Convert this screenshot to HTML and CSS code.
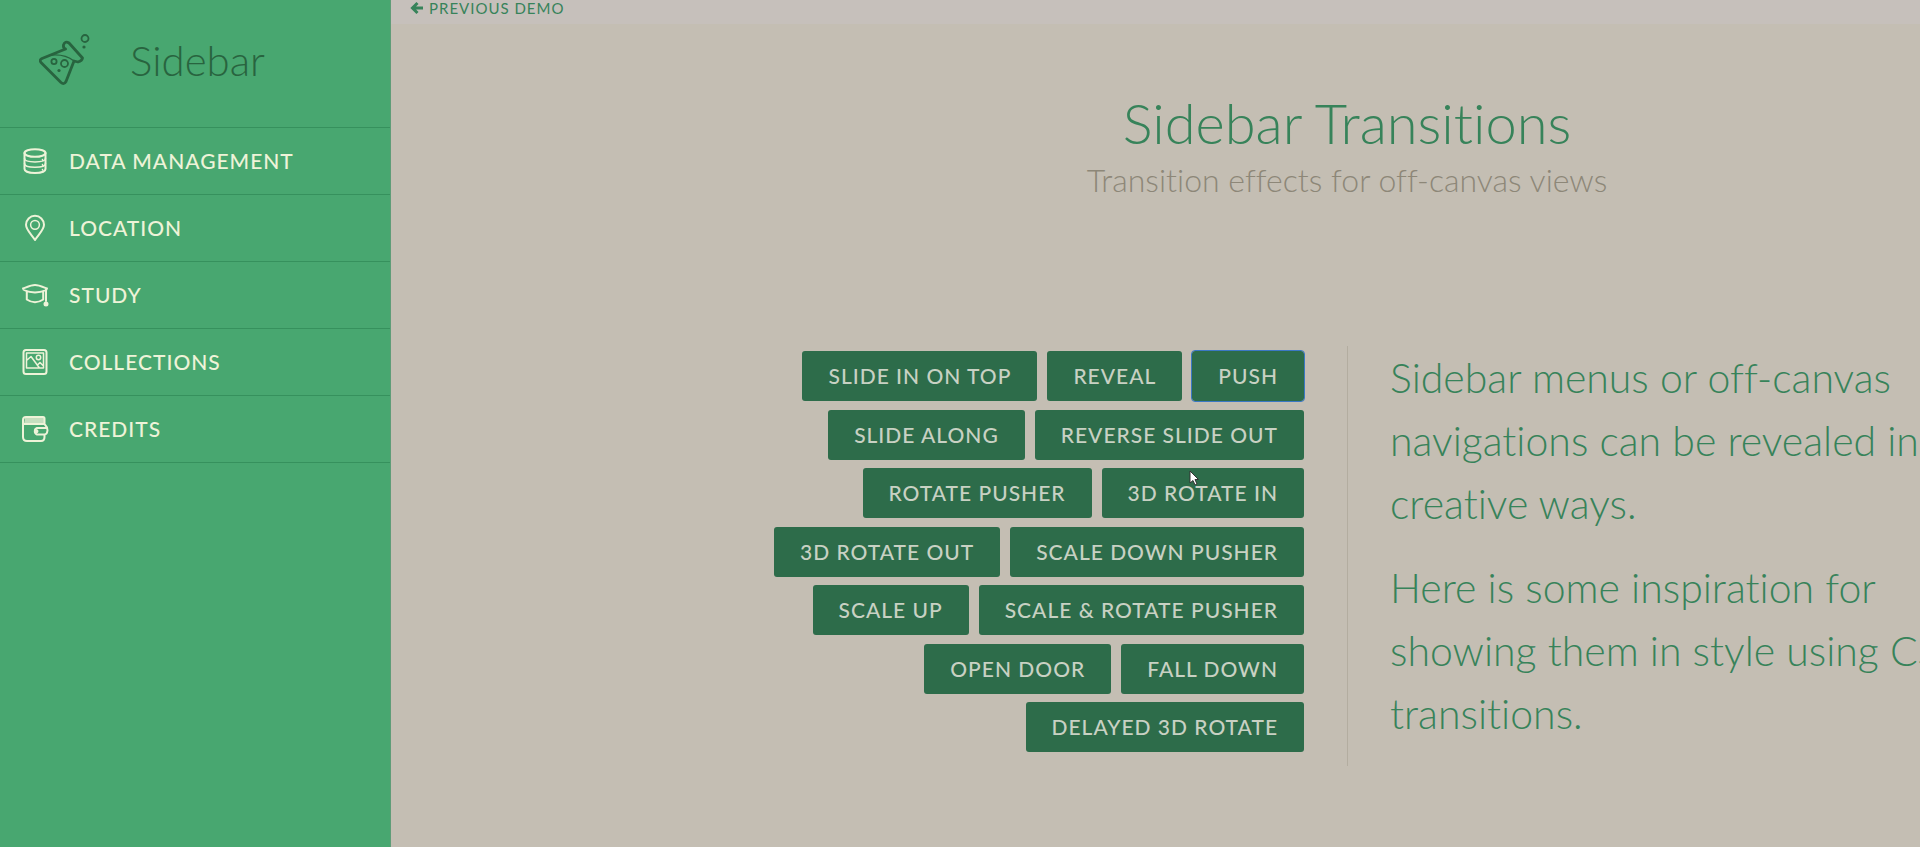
FILE: index.html
```html
<!DOCTYPE html>
<html lang="en">
<head>
<meta charset="utf-8">
<title>Sidebar Transitions</title>
<link rel="stylesheet" href="styles.css">
</head>
<body>
<div class="container">
  <nav class="menu">
    <h2 class="menu-title">
      <svg class="menu-logo" viewBox="0 0 52 52" aria-hidden="true">
        <g fill="none" stroke="currentColor" stroke-linejoin="round" stroke-linecap="round">
          <path stroke-width="2.8" d="M26.500 15L3 24.500Q0 26 2 28.500L22 48.500Q25 51 27 47.500L35 27L39 28Q43 27 43.500 24L30 9Q26 6.500 24.500 11Q24 14 26.500 15"/>
          <path stroke-width="1.400" d="M13 21Q26 20 35 27"/>
          <circle stroke-width="1.800" cx="15" cy="27.500" r="2.600"/>
          <circle stroke-width="1.800" cx="25.500" cy="29.500" r="3.500"/>
          <circle stroke-width="1.800" cx="46" cy="4.500" r="3.500"/>
        </g>
        <circle fill="currentColor" cx="20" cy="36.500" r="1.600"/>
        <circle fill="currentColor" cx="45" cy="13" r="1.600"/>
      </svg>
      <span>Sidebar</span>
    </h2>
    <ul class="menu-list">
      <li><a class="menu-link" href="#">
        <svg class="menu-icon" viewBox="0 0 26 26" aria-hidden="true"><ellipse cx="13" cy="5" rx="10.500" ry="3.800"/><path d="M2.500 5V21C2.500 26.300 23.500 26.300 23.500 21V5"/><path class="thin" d="M2.500 10.500C2.500 15 23.500 15 23.500 10.500M2.500 15.500C2.500 20.500 23.500 20.500 23.500 15.500M20.500 11.500v.5M20.500 16.500v.5M20.500 21.500v.5"/></svg>
        Data Management</a></li>
      <li><a class="menu-link" href="#">
        <svg class="menu-icon" viewBox="0 0 26 26" aria-hidden="true"><path d="M13 25C10 20 4 15 4 9.800A9 9 0 0 1 22 9.800C22 15 16 20 13 25Z"/><circle class="thin" cx="13" cy="9.800" r="4.400"/></svg>
        Location</a></li>
      <li><a class="menu-link" href="#">
        <svg class="menu-icon" viewBox="0 0 26 26" aria-hidden="true"><path d="M1 6.500C5 5 9 3 13 3S21 5 25 6.500C25 9 18 10 13 10.500C8 10 1 9 1 6.500ZM4.800 9V17.500Q13 23 21.200 17.500V9M24 7.500V19"/><circle class="solid" cx="24" cy="22" r="1.500"/></svg>
        Study</a></li>
      <li><a class="menu-link" href="#">
        <svg class="menu-icon" viewBox="0 0 26 26" aria-hidden="true"><rect x="1.500" y="1" width="23" height="24" rx="2.500"/><path class="thin" d="M4.500 4h17v15h-17ZM4.500 11.500L9 7.500L17.500 19M15.500 16L18 13.500L21.500 17"/><circle class="thin" cx="16.500" cy="8.500" r="2.200"/></svg>
        Collections</a></li>
      <li><a class="menu-link" href="#">
        <svg class="menu-icon" viewBox="0 0 26 26" aria-hidden="true"><path class="shade" d="M3 2H22.500V8H2Z"/><path d="M22.500 8V2.500Q22.500 1 21 1H4Q1 1 1 4V21Q1 25 5 25H19Q22.500 25 22.500 21V19M1 8H22.500Q25.500 11 25.500 14.500Q25 18.500 22.500 18.500H15A3.500 3.500 0 0 1 15 12H24"/><circle class="solid" cx="14.500" cy="15.300" r="1"/></svg>
        Credits</a></li>
    </ul>
  </nav>
  <main class="pusher">
    <div class="top-bar">
      <a class="top-link" href="#">
        <svg class="top-arrow" viewBox="0 0 14 14" aria-hidden="true"><path d="M7.500 2L2.500 7L7.500 12M3 7H13"/></svg>
        Previous Demo</a>
    </div>
    <header class="page-header">
      <h1 class="page-title">Sidebar Transitions</h1>
      <p class="page-subtitle">Transition effects for off-canvas views</p>
    </header>
    <div class="columns">
      <div class="effects">
        <button type="button">Slide in on top</button>
        <button type="button">Reveal</button>
        <button type="button" class="is-focused">Push</button>
        <button type="button">Slide along</button>
        <button type="button">Reverse slide out</button>
        <button type="button">Rotate pusher</button>
        <button type="button">3D rotate in</button>
        <button type="button">3D rotate out</button>
        <button type="button">Scale down pusher</button>
        <button type="button">Scale up</button>
        <button type="button">Scale &amp; rotate pusher</button>
        <button type="button">Open door</button>
        <button type="button">Fall down</button>
        <button type="button">Delayed 3D rotate</button>
      </div>
      <div class="intro">
        <p>Sidebar menus or off-canvas navigations can be revealed in creative ways.</p>
        <p>Here is some inspiration for showing them in style using CSS transitions.</p>
      </div>
    </div>
  </main>
</div>
<svg class="cursor" viewBox="0 0 10 16" aria-hidden="true"><path d="M1 1V13L4 10.500L6 15L8 14L6 9.500H9.500Z"/></svg>
</body>
</html>
```
FILE: styles.css
```css
* {
  box-sizing: border-box;
}

body {
  margin: 0;
  overflow: hidden;
  background: #c4beb3;
  font-family: Lato, "Liberation Sans", sans-serif;
  font-weight: 300;
  font-variant-ligatures: none;
}

a {
  color: inherit;
  text-decoration: none;
}

.container {
  display: flex;
  min-height: 100vh;
}

/* Sidebar */
.menu {
  flex: none;
  width: 391px;
  background: #48a770;
  border-right: 1px solid #5f9d78;
}

.menu-title {
  display: flex;
  align-items: center;
  gap: 39px;
  height: 127px;
  margin: 0;
  padding: 0 39px 8px;
  color: #28643f;
  font-size: 42px;
  font-weight: 300;
}

.menu-logo {
  width: 52px;
  height: 52px;
}

.menu-list {
  margin: 0;
  padding: 0;
  list-style: none;
  border-top: 1px solid #36915d;
}

.menu-link {
  display: flex;
  align-items: center;
  gap: 21px;
  padding: 20px 22px;
  border-bottom: 1px solid #36915d;
  color: #eef3d8;
  font-size: 21px;
  font-weight: 500;
  line-height: 26px;
  letter-spacing: 1px;
  text-transform: uppercase;
}

.menu-icon {
  width: 26px;
  height: 26px;
  overflow: visible;
  fill: none;
  stroke: currentColor;
  stroke-width: 2;
  stroke-linejoin: round;
  stroke-linecap: round;
}

.menu-icon .thin {
  stroke-width: 1.5;
}

.menu-icon .solid {
  fill: currentColor;
}

.menu-icon .shade {
  fill: #c5dfbf;
  stroke: none;
}

/* Page that is pushed aside by the open sidebar */
.pusher {
  flex: none;
  width: 100vw;
  padding-right: 8px;
}

.top-bar {
  height: 24px;
  margin-right: -8px;
  padding-left: 19px;
  background: #c6c0bb;
  color: #37835a;
}

.top-link {
  display: flex;
  align-items: center;
  gap: 5px;
  font-size: 15px;
  font-weight: 400;
  line-height: 16px;
  letter-spacing: 1px;
  text-transform: uppercase;
}

.top-arrow {
  width: 14px;
  height: 14px;
  fill: none;
  stroke: currentColor;
  stroke-width: 3;
}

.page-header {
  padding: 64px 0 144px;
  text-align: center;
}

.page-title {
  margin: 0;
  color: #37835a;
  font-size: 56px;
  font-weight: 300;
  line-height: 70px;
}

.page-subtitle {
  margin: 0;
  color: #8d8778;
  font-size: 32px;
  line-height: 44px;
}

.columns {
  display: grid;
  grid-template-columns: 1fr 1fr;
  max-width: 1290px;
  margin: 0 auto;
}

.effects {
  display: flex;
  flex-wrap: wrap;
  justify-content: flex-end;
  align-content: space-between;
  gap: 8px 10px;
  padding: 5px 43px 14px 0;
}

.effects button {
  padding: 12px 26px;
  border: 0;
  border-radius: 3px;
  background: #2d6c4a;
  color: #c8d1c3;
  font: 500 21px/26px Lato, "Liberation Sans", sans-serif;
  letter-spacing: 1px;
  text-transform: uppercase;
}

.effects .is-focused {
  outline: 1px solid #3b78c4;
}

.intro {
  padding-left: 42px;
  border-left: 1px solid #b3ada0;
  color: #37835a;
  font-size: 41px;
  line-height: 63px;
}

.intro p {
  margin: 0 0 21px;
}

.cursor {
  position: absolute;
  top: 470px;
  left: 1189px;
  width: 10px;
  height: 16px;
  fill: #fff;
  stroke: #333;
  stroke-width: 1;
}
```
